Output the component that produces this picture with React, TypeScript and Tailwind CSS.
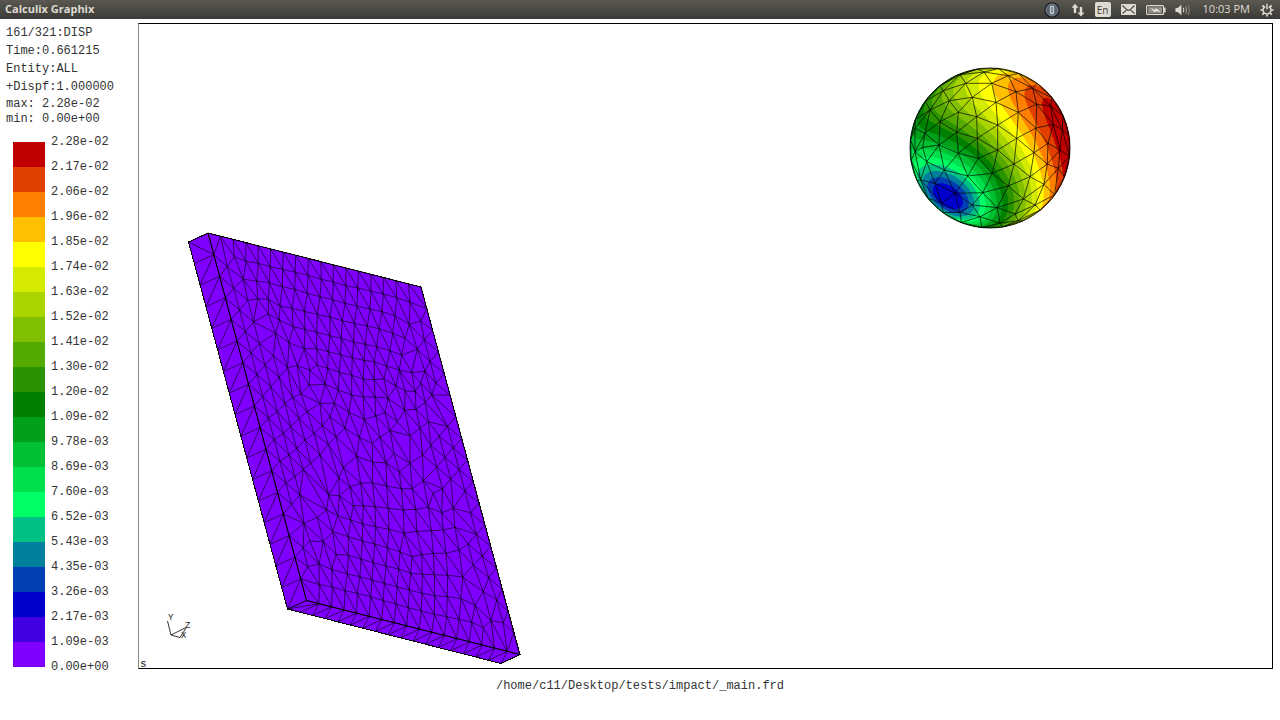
import type { ReactNode } from "react";

type Pt = [number, number];
type Tri = [number, number, number];

/* ---------- triangulation ---------- */

function triangulate(points: Pt[]): Tri[] {
  const n = points.length;
  const pts: Pt[] = [...points, [-9000, -7000], [9100, -7300], [150, 11000]];
  const circum = (t: Tri) => {
    const [ax, ay] = pts[t[0]];
    const bx = pts[t[1]][0] - ax;
    const by = pts[t[1]][1] - ay;
    const cx = pts[t[2]][0] - ax;
    const cy = pts[t[2]][1] - ay;
    const d = 2 * (bx * cy - by * cx) || 1e-12;
    const b2 = bx * bx + by * by;
    const c2 = cx * cx + cy * cy;
    const ux = (cy * b2 - by * c2) / d;
    const uy = (bx * c2 - cx * b2) / d;
    return { t, x: ax + ux, y: ay + uy, r: ux * ux + uy * uy };
  };
  let list = [circum([n, n + 1, n + 2])];
  for (let i = 0; i < n; i++) {
    const [px, py] = pts[i];
    const edges = new Map<string, Pt>();
    list = list.filter((c) => {
      if ((px - c.x) ** 2 + (py - c.y) ** 2 >= c.r) return true;
      for (let k = 0; k < 3; k++) {
        const a = c.t[k];
        const b = c.t[(k + 1) % 3];
        const key = a < b ? `${a}-${b}` : `${b}-${a}`;
        if (edges.has(key)) edges.delete(key);
        else edges.set(key, [a, b]);
      }
      return false;
    });
    edges.forEach(([a, b]) => list.push(circum([a, b, i])));
  }
  return list
    .map((c) => c.t)
    .filter((t) => t.every((v) => v < n))
    .filter(([a, b, c]) => {
      const area =
        (pts[b][0] - pts[a][0]) * (pts[c][1] - pts[a][1]) -
        (pts[b][1] - pts[a][1]) * (pts[c][0] - pts[a][0]);
      return Math.abs(area) > 0.001;
    });
}

function edgePath(tris: Tri[], pts: Pt[]): string {
  const seen = new Set<string>();
  let d = "";
  for (const t of tris) {
    for (let k = 0; k < 3; k++) {
      const a = Math.min(t[k], t[(k + 1) % 3]);
      const b = Math.max(t[k], t[(k + 1) % 3]);
      const key = `${a}-${b}`;
      if (seen.has(key)) continue;
      seen.add(key);
      d += `M${pts[a][0].toFixed(1)} ${pts[a][1].toFixed(1)}L${pts[b][0].toFixed(1)} ${pts[b][1].toFixed(1)}`;
    }
  }
  return d;
}

/* ---------- plate ---------- */

const N = 17;
const U: Pt = [213 / N, 54 / N];
const V: Pt = [98.5 / N, 367.5 / N];
const ORIGIN: Pt = [208, 233];
const toScreen = ([u, v]: Pt): Pt => [
  ORIGIN[0] + u * U[0] + v * V[0],
  ORIGIN[1] + u * U[1] + v * V[1],
];
const toPlate = ([x, y]: Pt): Pt => {
  const dx = x - ORIGIN[0];
  const dy = y - ORIGIN[1];
  const det = U[0] * V[1] - V[0] * U[1];
  return [(dx * V[1] - dy * V[0]) / det, (U[0] * dy - U[1] * dx) / det];
};

const UPPER_NODES: Pt[] = [
  [163, 110], [198, 124], [235, 130], [271, 140], [308, 148], [346, 157], [384, 166], [424, 178],
  [460, 186], [498, 197], [533, 204], [573, 214], [610, 222], [650, 233], [690, 247], [142, 140],
  [190, 178], [230, 183], [268, 188], [307, 200], [344, 208], [382, 220], [420, 230], [458, 239],
  [495, 250], [531, 258], [570, 267], [606, 275], [645, 287], [688, 313], [722, 303],
  [233, 236], [265, 238], [300, 258], [336, 265], [373, 274], [412, 283], [450, 291], [487, 302],
  [523, 310], [562, 318], [597, 326], [638, 340], [675, 355],
  [265, 282], [298, 300], [340, 320], [375, 328], [410, 337], [450, 347], [484, 355], [521, 366],
  [556, 373], [590, 380], [630, 392], [665, 405], [712, 388],
  [287, 340], [327, 368], [373, 386], [410, 386], [445, 395], [482, 404], [517, 413], [552, 421],
  [583, 425], [620, 438], [658, 450], [695, 458], [735, 453],
  [352, 437], [412, 435], [443, 445], [478, 457], [515, 466], [550, 477], [583, 479], [612, 477],
  [648, 498], [675, 512], [706, 515], [722, 488],
  [387, 495], [436, 493], [475, 510], [515, 525], [550, 531], [585, 531], [624, 535], [674, 571],
  [708, 568], [736, 547], [755, 525],
  [420, 550], [463, 550], [507, 577], [553, 598], [587, 588], [615, 578], [652, 605],
  [450, 590], [495, 625], [530, 709], [538, 652], [577, 670], [600, 652], [630, 632],
  [690, 647], [720, 625], [745, 605],
  [468, 650], [445, 673], [420, 705], [392, 730], [370, 748], [345, 770],
  [427, 617], [402, 640], [375, 660], [350, 685], [327, 705],
  [382, 575], [357, 595], [332, 620], [310, 640],
  [363, 522], [338, 532], [315, 550], [292, 575],
];
const LOWER_NODES: Pt[] = [
  [178, 464], [217, 471], [255, 482], [292, 490], [332, 500], [370, 512], [408, 522], [445, 533],
  [484, 543], [523, 553], [560, 560], [597, 568], [635, 577], [670, 593], [693, 572], [730, 578],
  [143, 410], [177, 402], [215, 418], [262, 432], [300, 440], [336, 450], [373, 460], [411, 470],
  [448, 480], [486, 490], [524, 497], [562, 500], [603, 506], [645, 526], [670, 485], [710, 510],
  [228, 373], [265, 376], [303, 387], [340, 398], [378, 408], [416, 417], [452, 430], [487, 433],
  [523, 434], [563, 436], [608, 441], [640, 405], [686, 443],
  [150, 333], [190, 335], [218, 305], [265, 320], [307, 333], [344, 342], [382, 353], [420, 365],
  [456, 380], [485, 374], [520, 370], [558, 370], [597, 360],
  [132, 280], [172, 262], [200, 240], [233, 257], [272, 270], [308, 282], [347, 290], [387, 298],
  [432, 310], [470, 304], [514, 302], [550, 300], [585, 292],
  [206, 195], [238, 197], [280, 227], [310, 227], [345, 230], [385, 235], [430, 240], [467, 238],
  [505, 232], [545, 248], [580, 235],
  [270, 170], [302, 160], [337, 158], [380, 168], [424, 176], [457, 176], [490, 152], [520, 190],
  [250, 112], [290, 80], [338, 97], [378, 98], [418, 125], [450, 100], [402, 70],
];

const plateNodes: Pt[] = [];
for (let i = 0; i <= N; i++) plateNodes.push([i, 0], [i, N]);
for (let j = 1; j < N; j++) plateNodes.push([0, j], [N, j]);
const addNode = (p: Pt, gap: number) => {
  if (p[0] < 0.4 || p[0] > N - 0.4 || p[1] < 0.4 || p[1] > N - 0.4) return;
  if (plateNodes.every((q) => Math.hypot(p[0] - q[0], p[1] - q[1]) > gap)) plateNodes.push(p);
};
UPPER_NODES.forEach(([x, y]) => addNode(toPlate([180 + x / 3, 220 + y / 3]), 0.6));
LOWER_NODES.forEach(([x, y]) => addNode(toPlate([260 + x / 3, 430 + y / 3]), 0.6));
for (let i = 1; i < 9; i++) {
  for (let j = 0; j < 24; j++) {
    addNode([i * 0.93, j - i * 0.58], 0.76);
    addNode([N - i * 0.93, N - j + i * 0.58], 0.76);
  }
}
const platePts = plateNodes.map(toScreen);
const plateMesh = edgePath(triangulate(plateNodes), platePts);

const lerp = (a: Pt, b: Pt, t: number): Pt => [a[0] + (b[0] - a[0]) * t, a[1] + (b[1] - a[1]) * t];
const P_A: Pt = [208, 233];
const P_D: Pt = [306.5, 600.5];
const P_C: Pt = [520, 654.5];
const P_OUT: Pt = [188.5, 242];
const P_LOW: Pt = [287.5, 609];
const P_END: Pt = [501, 663.5];
// Triangles of a side face between an outer and an inner edge.
const strip = (o0: Pt, o1: Pt, i0: Pt, i1: Pt): string => {
  let d = "";
  for (let j = 0; j <= N; j++) {
    const o = lerp(o0, o1, j / N);
    const i = lerp(i0, i1, j / N);
    d += `M${o}L${i}`;
    if (j === 0) d += `M${o}L${lerp(i0, i1, 1 / N)}`;
    else if (j < N) d += `M${lerp(o0, o1, (j + 1) / N)}L${i}`;
  }
  return d;
};
const stripMesh = strip(P_OUT, P_LOW, P_A, P_D) + strip(P_LOW, P_END, P_D, P_C);

/* ---------- sphere ---------- */

const COLORS = [
  "#8000ff", "#4000e0", "#0000cc", "#0040b4", "#00809c", "#00c084", "#00ff66", "#00e04c",
  "#00c033", "#00a01a", "#008000", "#2a9400", "#55aa00", "#80c000", "#aad400", "#d4ea00",
  "#ffff00", "#ffc000", "#ff8000", "#e04000", "#c00000",
];

const SPHERE: Pt = [990, 148];
const RADIUS = 80;
const norm = (x: number, y: number): Pt => [(x - 270) / 240, (y - 264) / 240];

// x, y, level
const SAMPLES: [number, number, number][] = [
  [148, 408, 1.8], [102, 374, 3], [190, 438, 3], [84, 358, 4], [212, 448, 4], [172, 385, 3],
  [150, 318, 6.4], [205, 350, 6.5], [240, 400, 6.5], [225, 460, 6.5], [62, 300, 6.6],
  [60, 205, 10.3], [130, 232, 10.5], [235, 290, 10.5], [290, 360, 10.5], [300, 430, 10.5],
  [285, 490, 10.5], [80, 140, 11.5], [160, 100, 13.5], [230, 190, 13.5], [300, 270, 13.5],
  [348, 350, 13.5], [350, 440, 13.5], [400, 310, 16.5], [425, 370, 16.5], [412, 410, 16.3],
  [245, 40, 16], [270, 130, 16], [335, 230, 16], [285, 60, 17], [310, 140, 17], [370, 230, 17],
  [325, 60, 18], [355, 150, 18], [410, 250, 18], [375, 80, 19], [405, 180, 19], [440, 280, 19],
  [425, 120, 20], [455, 190, 20], [480, 260, 20], [495, 200, 20.8], [460, 340, 18.5],
];
const basis = (x: number, y: number): number[] => {
  const z = Math.sqrt(Math.max(0, 1 - x * x - y * y));
  return [1, x, y, z, x * y, x * z, y * z, x * x, y * y];
};
// The squared displacement of a rigid motion is quadratic in position.
function fitField(): number[] {
  const m = 9;
  const A = Array.from({ length: m }, () => new Array<number>(m + 1).fill(0));
  for (const [sx, sy, v] of SAMPLES) {
    const [x, y] = norm(sx, sy);
    const b = basis(x, y);
    const w = (v < 5 ? 5 : 1) / (v * v);
    for (let i = 0; i < m; i++) {
      for (let j = 0; j < m; j++) A[i][j] += w * b[i] * b[j];
      A[i][m] += w * b[i] * v * v;
    }
  }
  for (let i = 0; i < m; i++) A[i][i] += 1e-5;
  for (let c = 0; c < m; c++) {
    for (let r = 0; r < m; r++) {
      if (r === c) continue;
      const f = A[r][c] / A[c][c];
      for (let k = c; k <= m; k++) A[r][k] -= f * A[c][k];
    }
  }
  return A.map((row, i) => row[m] / row[i]);
}
const FIELD = fitField();
const level = (x: number, y: number) => {
  const q = basis(x, y).reduce((s, b, i) => s + b * FIELD[i], 0);
  return Math.min(20.99, Math.sqrt(Math.max(4.1, q)));
};

type P3 = [number, number, number];
const clip = (poly: P3[], at: number, sign: number): P3[] => {
  const out: P3[] = [];
  poly.forEach((p, i) => {
    const q = poly[(i + 1) % poly.length];
    const dp = (p[2] - at) * sign;
    const dq = (q[2] - at) * sign;
    if (dp >= 0) out.push(p);
    if (dp >= 0 !== dq >= 0) {
      const t = dp / (dp - dq);
      out.push([p[0] + (q[0] - p[0]) * t, p[1] + (q[1] - p[1]) * t, at]);
    }
  });
  return out;
};
const bandPaths: string[] = COLORS.map(() => "");
const RINGS = 22;
const SPOKES = 64;
const polar = (r: number, s: number): P3 => {
  const rho = Math.sin(((r / RINGS) * Math.PI) / 2);
  const a = (s / SPOKES) * Math.PI * 2;
  const x = rho * Math.cos(a);
  const y = rho * Math.sin(a);
  return [SPHERE[0] + x * RADIUS, SPHERE[1] + y * RADIUS, level(x, y)];
};
for (let r = 0; r < RINGS; r++) {
  for (let s = 0; s < SPOKES; s++) {
    const a = polar(r, s);
    const b = polar(r + 1, s);
    const c = polar(r + 1, s + 1);
    const d = polar(r, s + 1);
    for (const tri of [[a, b, c], [a, c, d]]) {
      const lo = Math.floor(Math.min(tri[0][2], tri[1][2], tri[2][2]));
      const hi = Math.floor(Math.max(tri[0][2], tri[1][2], tri[2][2]));
      for (let k = lo; k <= hi; k++) {
        const poly = clip(clip(tri, k, 1), k + 1, -1);
        if (poly.length > 2)
          bandPaths[k] += `M${poly.map((p) => `${p[0].toFixed(2)} ${p[1].toFixed(2)}`).join("L")}Z`;
      }
    }
  }
}

const SPHERE_NODES: Pt[] = [
  [252, 36], [180, 44], [197, 70], [275, 70], [325, 47], [217, 112], [288, 127], [348, 95],
  [398, 85], [130, 92], [148, 122], [90, 150], [175, 157], [230, 170], [293, 195], [355, 157],
  [410, 133], [120, 185], [170, 217], [75, 220], [45, 205], [232, 235], [350, 235], [408, 204],
  [460, 193], [452, 138], [293, 270], [235, 295], [175, 280], [117, 255], [68, 262], [402, 278],
  [444, 250], [487, 210], [342, 312], [277, 340], [203, 348], [133, 330], [80, 305], [45, 275],
  [390, 350], [442, 312], [480, 270], [325, 378], [248, 398], [165, 400], [105, 370], [62, 360],
  [370, 417], [432, 373], [475, 325], [292, 443], [217, 435], [345, 462], [405, 435], [240, 470],
  [180, 457], [125, 430], [300, 490], [355, 482],
];
const sphereNodes: Pt[] = SPHERE_NODES.map(([x, y]) => norm(x, y));
for (let i = 0; i < 24; i++) {
  const a = ((i + 0.4) / 24) * Math.PI * 2;
  sphereNodes.push([Math.cos(a) * 0.998, Math.sin(a) * 0.998]);
}
const stereo = sphereNodes.map(([x, y]): Pt => {
  const k = 1 + Math.sqrt(Math.max(0, 1 - x * x - y * y));
  return [x / k, y / k];
});
const sphereMesh = edgePath(
  triangulate(stereo),
  sphereNodes.map(([x, y]): Pt => [SPHERE[0] + x * RADIUS, SPHERE[1] + y * RADIUS]),
);

/* ---------- legend ---------- */

const LABELS = [
  "2.28e-02", "2.17e-02", "2.06e-02", "1.96e-02", "1.85e-02", "1.74e-02", "1.63e-02", "1.52e-02",
  "1.41e-02", "1.30e-02", "1.20e-02", "1.09e-02", "9.78e-03", "8.69e-03", "7.60e-03", "6.52e-03",
  "5.43e-03", "4.35e-03", "3.26e-03", "2.17e-03", "1.09e-03", "0.00e+00",
];
const SWATCHES = [
  "bg-[#c00000]", "bg-[#e04000]", "bg-[#ff8000]", "bg-[#ffc000]", "bg-[#ffff00]", "bg-[#d4ea00]",
  "bg-[#aad400]", "bg-[#80c000]", "bg-[#55aa00]", "bg-[#2a9400]", "bg-[#008000]", "bg-[#00a01a]",
  "bg-[#00c033]", "bg-[#00e04c]", "bg-[#00ff66]", "bg-[#00c084]", "bg-[#00809c]", "bg-[#0040b4]",
  "bg-[#0000cc]", "bg-[#4000e0]", "bg-[#8000ff]",
];

function Sidebar() {
  return (
    <aside className="w-[138px] shrink-0 pt-[1px]">
      <div className="pl-[6px] leading-[18px]">
        <p>161/321:DISP</p>
        <p>Time:0.661215</p>
        <p>Entity:ALL</p>
        <p>+Dispf:1.000000</p>
      </div>
      <div className="pl-[6px] pt-px leading-[15px]">
        <p>max: 2.28e-02</p>
        <p>min: 0.00e+00</p>
      </div>
      <div className="flex gap-[6px] pl-[13px] pt-[3px]">
        <div className="w-8 pt-3" aria-hidden="true">
          {SWATCHES.map((c) => (
            <div key={c} className={`h-[25px] ${c}`} />
          ))}
        </div>
        <ul>
          {LABELS.map((l, i) => (
            <li key={i} className="h-[25px] leading-[25px]">
              {l}
            </li>
          ))}
        </ul>
      </div>
    </aside>
  );
}

/* ---------- top panel ---------- */

function Indicator({ label, className, children }: { label: string; className: string; children: ReactNode }) {
  return (
    <button type="button" aria-label={label} className={`flex h-[18px] items-center justify-center ${className}`}>
      {children}
    </button>
  );
}

function TopBar() {
  return (
    <header className="flex h-[19px] shrink-0 items-center justify-between bg-linear-to-b from-[#5a5850] to-[#3c3b37] pl-[5px] pr-[6px] font-['Open_Sans','Noto_Sans',sans-serif] text-[11px] text-[#dfdbd2]">
      <h1 className="font-bold">Calculix Graphix</h1>
      <div className="flex items-center">
        <Indicator label="Info" className="mr-[11px] w-4">
          <svg width="16" height="16" viewBox="0 0 16 16">
            <circle cx="8" cy="8" r="7.8" fill="#1d2126" />
            <circle cx="8" cy="8" r="6" fill="#56626e" stroke="#8b959e" strokeWidth="0.8" />
            <rect x="5.8" y="3.8" width="4.4" height="8.4" rx="1.2" fill="#b9c4cd" />
            <rect x="7.4" y="5" width="1.2" height="5.6" fill="#5f6b76" />
          </svg>
        </Indicator>
        <Indicator label="Network" className="mr-[10px] w-[14px]">
          <svg width="14" height="14" viewBox="0 0 14 14" fill="#dfdbd2">
            <path d="M4 .8 7.5 4.8H5.2V10H2.8V4.8H.5zM10 13.4 6.5 9.4h2.3V4h2.4v5.4h2.3z" />
          </svg>
        </Indicator>
        <Indicator label="Keyboard layout" className="mr-[10px] w-4">
          <span className="flex h-[15px] w-4 items-center justify-center rounded-xs bg-[#dfdbd2] text-[10px] font-medium leading-none text-[#3c3b37]">
            En
          </span>
        </Indicator>
        <Indicator label="Messages" className="mr-[10px] w-[15px]">
          <svg width="15" height="11" viewBox="0 0 15 11">
            <rect width="15" height="11" rx="0.8" fill="#dfdbd2" />
            <path d="M1.5 1.5 6 5.8Q7.5 6.8 9 5.8L13.5 1.5M1.5 9.5 5.4 6.2M13.5 9.5 9.6 6.2" fill="none" stroke="#45443f" strokeWidth="1.1" />
          </svg>
        </Indicator>
        <Indicator label="Battery" className="mr-[9px] w-5">
          <svg width="20" height="10" viewBox="0 0 20 10">
            <rect x="0.6" y="0.6" width="17" height="8.8" rx="1" fill="none" stroke="#dfdbd2" strokeWidth="1.1" />
            <rect x="2.2" y="2.2" width="13.8" height="5.6" fill="#97948b" />
            <rect x="18" y="2.6" width="1.6" height="4.8" fill="#dfdbd2" />
            <path d="m4.6 2.8 4.6 2.6.6-2.2 5 4.2-5-2-.6 2z" fill="#fff" />
          </svg>
        </Indicator>
        <Indicator label="Volume" className="mr-3 w-4">
          <svg width="16" height="12" viewBox="0 0 16 12" fill="none">
            <path d="M.5 4h2.2L6.4.8v10.4L2.7 8H.5z" fill="#dfdbd2" />
            <path d="M8.2 3.8Q9.6 6 8.2 8.2" stroke="#dfdbd2" strokeWidth="1.1" />
            <path d="M10.5 2.4Q12.8 6 10.5 9.6" stroke="#99968e" strokeWidth="1.1" />
            <path d="M12.9 1Q16 6 12.9 11" stroke="#827f78" strokeWidth="1.1" />
          </svg>
        </Indicator>
        <button type="button" className="mr-[10px] whitespace-nowrap">
          10:03 PM
        </button>
        <Indicator label="System" className="w-[14px]">
          <svg width="14" height="14" viewBox="0 0 14 14" fill="none" stroke="#dfdbd2">
            <path d="M5.2 3.5A4 4 0 1 0 8.8 3.5" strokeWidth="1.5" />
            <path d="M7 .8v5.4" strokeWidth="1.4" />
            <path d="M.4 7H2.6M11.4 7h2.2M7 11.4v2.2M2.3 2.3l1.5 1.5M11.7 2.3l-1.5 1.5M2.3 11.7l1.5-1.5M11.7 11.7l-1.5-1.5" strokeWidth="1.7" />
          </svg>
        </Indicator>
      </div>
    </header>
  );
}

/* ---------- viewport ---------- */

function Viewport() {
  return (
    <svg
      role="img"
      aria-label="Displacement plot"
      viewBox="139 24 1133 644"
      preserveAspectRatio="xMinYMin meet"
      className="block h-full w-full overflow-visible"
    >
      <path
        d={`M${P_OUT}L${P_A}L421 287L${P_C}L${P_END}L${P_LOW}Z`}
        fill="#8000ff"
        stroke="#000"
        strokeWidth="1"
        shapeRendering="crispEdges"
      />
      <path d={plateMesh} fill="none" stroke="#000" strokeOpacity="0.75" strokeWidth="0.8" />
      <path d={stripMesh} fill="none" stroke="#000" strokeOpacity="0.75" strokeWidth="0.8" />
      <path d={`M${P_A}L${P_D}L${P_C}`} fill="none" stroke="#000" />

      <g shapeRendering="crispEdges">
        {bandPaths.map((d, i) => (
          <path key={i} d={d} fill={COLORS[i]} stroke={COLORS[i]} strokeWidth="0.3" />
        ))}
      </g>
      <path d={sphereMesh} fill="none" stroke="#000" strokeOpacity="0.85" strokeWidth="0.8" />
      <circle cx={SPHERE[0]} cy={SPHERE[1]} r={RADIUS} fill="none" stroke="#000" strokeWidth="0.8" />

      <path d="M167.5 621 171 635 180 637.5 186 628M171 635 185 628" fill="none" stroke="#000" strokeWidth="0.8" />
      <g fontSize="9" fontFamily="'Liberation Mono', monospace" fill="#222">
        <text x="168" y="620">Y</text>
        <text x="185" y="628">Z</text>
        <text x="181" y="638">X</text>
        <text x="140" y="667" fontSize="11">s</text>
      </g>
    </svg>
  );
}

export default function App() {
  return (
    <div className="flex h-screen flex-col overflow-hidden bg-white font-['Liberation_Mono',monospace] text-[12px] text-[#333]">
      <TopBar />
      <main className="flex min-h-0 flex-1 pr-[7px] pt-1">
        <Sidebar />
        <section className="min-w-0 flex-1 border border-black border-l-[#888]">
          <Viewport />
        </section>
      </main>
      <footer className="flex h-[51px] shrink-0 justify-center pt-2 leading-[18px]">
        /home/c11/Desktop/tests/impact/_main.frd
      </footer>
    </div>
  );
}
